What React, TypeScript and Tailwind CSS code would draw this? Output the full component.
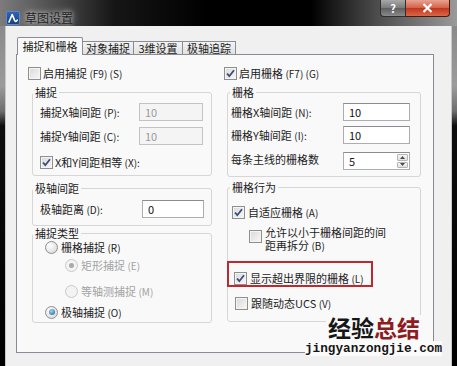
import React from "react"

function Check({ checked = false }: { checked?: boolean }) {
  return (
    <span className="flex size-[13px] shrink-0 items-center justify-center border border-[#8f8f8f] bg-[linear-gradient(135deg,#d9d9d9,#f8f8f8)] shadow-[inset_0_0_0_1px_#f4f4f4]">
      {checked ? (
        <svg width="11" height="11" viewBox="0 0 11 11" fill="none">
          <path d="M2 5.5 L4.3 8.2 L9 2.2" stroke="#3b4b78" strokeWidth="1.8" />
        </svg>
      ) : null}
    </span>
  )
}

function Radio({ checked = false, disabled = false }: { checked?: boolean; disabled?: boolean }) {
  return (
    <span
      className={
        disabled
          ? "flex size-[13px] shrink-0 items-center justify-center rounded-full border border-[#c9c9c9] bg-[#f3f3f3]"
          : "flex size-[13px] shrink-0 items-center justify-center rounded-full border border-[#8f8f8f] bg-[radial-gradient(circle_at_35%_35%,#ffffff,#d3d3d3)]"
      }
    >
      {checked ? (
        <span
          className={
            disabled
              ? "size-[5px] rounded-full bg-[#a9a9a9]"
              : "size-[6px] rounded-full bg-[radial-gradient(circle_at_40%_35%,#9fd6f6,#1d5a8a)]"
          }
        />
      ) : null}
    </span>
  )
}

function Key({ k }: { k: string }) {
  return <span className="text-[10px]">{k}</span>
}

function Field({ value, disabled = false, className = "" }: { value: string; disabled?: boolean; className?: string }) {
  return (
    <div
      className={
        (disabled
          ? "border-[#c3c3c3] bg-[#f4f4f4] text-[#9a9a9a] "
          : "border-[#abadb3] border-t-[#8a8c92] bg-white text-[#111] ") +
        "flex h-[18px] items-center border pl-[5px] text-[11px] " +
        className
      }
    >
      {value}
    </div>
  )
}

function Group({
  title,
  className = "",
  legendClass = "",
  children,
}: {
  title: string
  className?: string
  legendClass?: string
  children: React.ReactNode
}) {
  return (
    <fieldset className={"rounded-[3px] border border-[#d6d6d6] " + className}>
      <legend className={"px-[2px] text-[11px] leading-[14px] " + legendClass}>{title}</legend>
      {children}
    </fieldset>
  )
}

export default function App() {
  return (
    <div className="relative flex h-[366px] w-[457px] flex-col overflow-hidden bg-black font-['Noto_Sans_CJK_SC',sans-serif] text-[#1c1c1c]">
      {/* title bar */}
      <div className="flex h-[26px] shrink-0 bg-[linear-gradient(to_right,#7c7c7c_0%,#4c4c4c_12%,#161616_25%,#000_45%,#000_68%,#4a4a4a_82%,#9a9a9a_100%)]">
        <div className="mt-[11px] flex h-[14px] items-center gap-[5px] pl-[6px]">
          <span className="flex size-[14px] items-center justify-center rounded-[2px] border border-[#5f86c9] bg-[linear-gradient(#2f63b8,#173f86)]">
            <svg width="12" height="12" viewBox="0 0 12 12" fill="none">
              <path d="M2 10 L5.2 2.5 L7.6 8.4 Q8.6 10.4 10.2 8.2" stroke="#fff" strokeWidth="1.6" strokeLinecap="round" strokeLinejoin="round" />
            </svg>
          </span>
          <span className="text-[12px] leading-[14px] text-[#232323] [text-shadow:0_0_4px_#cfcfcf,0_0_8px_#bdbdbd]">草图设置</span>
        </div>
        <div className="ml-auto mr-[7px] flex h-[17px]">
          <div className="flex w-[26px] items-center justify-center rounded-bl-[4px] border border-t-0 border-[#2f2f2f] bg-[linear-gradient(#a8a8a8,#7a7a7a_50%,#5e5e5e_51%,#8a8a8a)] text-[11px] font-bold text-white">
            ?
          </div>
          <div className="flex w-[44px] items-center justify-center rounded-br-[4px] border border-l-0 border-t-0 border-[#4a1a12] bg-[linear-gradient(#e9a391,#d26048_50%,#c2341c_51%,#d9674a)]">
            <svg width="11" height="10" viewBox="0 0 11 10" fill="none">
              <path d="M1.5 1 L9.5 9 M9.5 1 L1.5 9" stroke="#fff" strokeWidth="2.2" />
            </svg>
          </div>
        </div>
      </div>

      {/* body */}
      <div className="flex min-h-0 flex-1">
        <div className="w-[6px] shrink-0 border-r border-[#c8c8c8] bg-[linear-gradient(to_bottom,#8a8a8a_0px,#9b9b9b_60px,#6e6e6e_85px,#0d0d0d_100px,#000)]" />
        <div className="flex-1 bg-[#f0f0f0] pt-[11px]">
          {/* tabs */}
          <div className="ml-[10px] flex h-[17px] items-end text-[11px]">
            <div className="relative z-10 -mb-px ml-px flex h-[18px] w-[66px] items-center justify-center rounded-t-[2px] border border-b-0 border-[#898c95] bg-[#f9f9f9]">
              捕捉和栅格
            </div>
            <div className="flex h-[13px] w-[51px] items-center justify-center border-r border-t border-[#898c95] bg-[linear-gradient(#f3f3f3,#e2e2e2)] leading-none">
              对象捕捉
            </div>
            <div className="flex h-[13px] w-[49px] items-center justify-center border-r border-t border-[#898c95] bg-[linear-gradient(#f3f3f3,#e2e2e2)] leading-none">
              3维设置
            </div>
            <div className="flex h-[13px] w-[53px] items-center justify-center border-r border-t border-[#898c95] bg-[linear-gradient(#f3f3f3,#e2e2e2)] leading-none">
              极轴追踪
            </div>
          </div>

          {/* panel */}
          <div className="ml-[10px] flex h-[299px] w-[418px] gap-[12px] border border-[#898c95] bg-[#f9f9f9] pl-[11px] pt-[10px] text-[11px]">
            {/* left column */}
            <div className="flex w-[184px] flex-col">
              <div className="flex h-[16px] items-center gap-[2px]">
                <Check />
                <span>
                  启用捕捉 <Key k="(F9) (S)" />
                </span>
              </div>

              <Group title="捕捉" className="ml-[4px] mt-[4px] pb-[5px]">
                <div className="mt-[4px] flex h-[18px] items-center justify-between pl-[7px] pr-[8px]">
                  <span>
                    捕捉X轴间距 <Key k="(P):" />
                  </span>
                  <Field value="10" disabled className="w-[64px]" />
                </div>
                <div className="mt-[6px] flex h-[18px] items-center justify-between pl-[7px] pr-[8px]">
                  <span>
                    捕捉Y轴间距 <Key k="(C):" />
                  </span>
                  <Field value="10" disabled className="w-[64px]" />
                </div>
                <div className="mt-[9px] flex h-[16px] items-center gap-[2px] pl-[7px]">
                  <Check checked />
                  <span>
                    X和Y间距相等 <Key k="(X):" />
                  </span>
                </div>
              </Group>

              <Group title="极轴间距" className="ml-[4px] mt-[5px] pb-[7px]">
                <div className="mt-[5px] flex h-[18px] items-center justify-between pl-[7px] pr-[7px]">
                  <span>
                    极轴距离 <Key k="(D):" />
                  </span>
                  <Field value="0" className="w-[62px]" />
                </div>
              </Group>

              <Group title="捕捉类型" className="ml-[4px] pb-[3px]">
                <div className="flex h-[14px] items-center gap-[3px] pl-[12px]">
                  <Radio />
                  <span>
                    栅格捕捉 <Key k="(R)" />
                  </span>
                </div>
                <div className="mt-[4px] flex h-[14px] items-center gap-[3px] pl-[32px] text-[#a3a3a3]">
                  <Radio checked disabled />
                  <span>
                    矩形捕捉 <Key k="(E)" />
                  </span>
                </div>
                <div className="mt-[12px] flex h-[14px] items-center gap-[3px] pl-[32px] text-[#a3a3a3]">
                  <Radio disabled />
                  <span>
                    等轴测捕捉 <Key k="(M)" />
                  </span>
                </div>
                <div className="mt-[7px] flex h-[14px] items-center gap-[3px] pl-[12px]">
                  <Radio checked />
                  <span>
                    极轴捕捉 <Key k="(O)" />
                  </span>
                </div>
              </Group>
            </div>

            {/* right column */}
            <div className="flex w-[197px] flex-col">
              <div className="flex h-[16px] items-center gap-[2px]">
                <Check checked />
                <span>
                  启用栅格 <Key k="(F7) (G)" />
                </span>
              </div>

              <Group title="栅格" className="ml-[3px] mt-[4px] pb-[6px]" legendClass="ml-[2px]">
                <div className="mt-[4px] flex h-[18px] items-center justify-between pl-[3px] pr-[10px]">
                  <span>
                    栅格X轴间距 <Key k="(N):" />
                  </span>
                  <Field value="10" className="w-[67px]" />
                </div>
                <div className="mt-[5px] flex h-[18px] items-center justify-between pl-[3px] pr-[10px]">
                  <span>
                    栅格Y轴间距 <Key k="(I):" />
                  </span>
                  <Field value="10" className="w-[67px]" />
                </div>
                <div className="mt-[8px] flex h-[18px] items-center justify-between pl-[3px] pr-[10px]">
                  <span className="-mt-[3px]">每条主线的栅格数</span>
                  <div className="flex h-[18px] w-[67px] border border-[#abadb3] border-t-[#8a8c92] bg-white">
                    <span className="flex-1 pl-[5px] text-[11px] leading-[16px]">5</span>
                    <div className="flex w-[13px] flex-col gap-px bg-white p-px">
                      <span className="flex flex-1 items-center justify-center rounded-[1px] border border-[#b5b5b5] bg-[linear-gradient(#f6f6f6,#e0e0e0)]">
                        <svg width="5" height="3" viewBox="0 0 5 3">
                          <path d="M0 3 L2.5 0 L5 3 Z" fill="#4a4a4a" />
                        </svg>
                      </span>
                      <span className="flex flex-1 items-center justify-center rounded-[1px] border border-[#b5b5b5] bg-[linear-gradient(#f6f6f6,#e0e0e0)]">
                        <svg width="5" height="3" viewBox="0 0 5 3">
                          <path d="M0 0 L2.5 3 L5 0 Z" fill="#4a4a4a" />
                        </svg>
                      </span>
                    </div>
                  </div>
                </div>
              </Group>

              <Group title="栅格行为" className="ml-[3px] mt-[3px] pb-[10px]" legendClass="ml-[2px]">
                <div className="mt-[10px] flex h-[16px] items-center gap-[3px] pl-[4px]">
                  <Check checked />
                  <span>
                    自适应栅格 <Key k="(A)" />
                  </span>
                </div>
                <div className="mt-[6px] flex items-start gap-[3px] pl-[21px]">
                  <span className="mt-[4px]">
                    <Check />
                  </span>
                  <span className="leading-[13px]">
                    允许以小于栅格间距的间
                    <br />
                    距再拆分 <Key k="(B)" />
                  </span>
                </div>
                <div className="relative mt-[18px] flex h-[16px] items-center gap-[3px] pl-[6px]">
                  <Check checked />
                  <span>
                    显示超出界限的栅格 <Key k="(L)" />
                  </span>
                  <div className="absolute -left-[1px] -top-[9px] h-[26px] w-[146px] border-2 border-[#c1272d]" />
                </div>
                <div className="mt-[9px] flex h-[16px] items-center gap-[3px] pl-[7px]">
                  <Check />
                  <span>
                    跟随动态UCS <Key k="(V)" />
                  </span>
                </div>
              </Group>
            </div>
          </div>
        </div>
        <div className="w-[6px] shrink-0 border-l border-[#c8c8c8] bg-[linear-gradient(to_bottom,#8a8a8a_0px,#9b9b9b_60px,#6e6e6e_85px,#0d0d0d_100px,#000)]" />
      </div>

      {/* watermark */}
      <div className="absolute left-[326px] top-[315px] bg-[#f9f9f9] px-[2px] text-[23px] font-bold leading-[25px]">
        <span className="text-[#161616]">经验</span>
        <span className="text-[#8e1c1f]">总结</span>
      </div>
      <div className="absolute left-[305px] top-[341px] bg-[#fbfbfb] font-['Liberation_Mono',monospace] text-[12.7px] font-bold leading-[15px] text-[#161616]">
        jingyanzongjie.com
      </div>
    </div>
  )
}
